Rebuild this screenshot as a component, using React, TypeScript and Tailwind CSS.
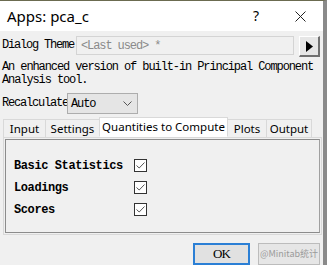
export default function App() {
  const mono = { fontFamily: '"Liberation Mono", "DejaVu Sans Mono", monospace' };
  const ui = { fontFamily: '"Segoe UI", "Noto Sans", "Open Sans", sans-serif' };
  const items = ['Basic Statistics', 'Loadings', 'Scores'];
  const tabs = [
    { label: 'Input', w: 'w-[43px]' },
    { label: 'Settings', w: 'w-[55px]' },
    { label: 'Quantities to Compute', w: 'w-[129px]', active: true },
    { label: 'Plots', w: 'w-[40px]' },
    { label: 'Output', w: 'w-[46px]' },
  ];

  return (
    <div className="w-[327px] h-[265px] bg-[#f0f0f0] overflow-hidden border-t border-t-[#6b6b50] border-r-[4px] border-r-[#8a8a8a] flex flex-col text-black">
      {/* Title bar */}
      <div className="h-[30px] bg-white flex items-center shrink-0">
        <span className="pl-[7px] text-[15px] leading-none" style={ui}>Apps: pca_c</span>
        <span className="ml-auto mr-[36px] text-[14px] leading-none" style={ui}>?</span>
        <svg className="mr-[17px]" width="11" height="11" viewBox="0 0 11 11">
          <path d="M0.5 0.5 L10.5 10.5 M10.5 0.5 L0.5 10.5" stroke="#222" strokeWidth="1" />
        </svg>
      </div>

      {/* Dialog theme */}
      <div className="flex items-start mt-[5px] h-[21px]">
        <span className="pl-[2px] w-[76px] pt-[3px] text-[12px] tracking-[-1.2px] leading-[13px] whitespace-nowrap" style={mono}>Dialog Theme</span>
        <div className="w-[218px] h-[19px] border border-[#d4d4d4] bg-[#f0f0f0] flex items-center pl-[4px]">
          <span className="text-[12px] tracking-[-1.1px] text-[#8a8a8a]" style={mono}>&lt;Last used&gt; *</span>
        </div>
        <div className="ml-[5px] w-[21px] h-[21px] bg-[#e6e6e6] border-t border-l border-t-white border-l-white border-b-2 border-r-2 border-b-[#707070] border-r-[#707070] flex items-center justify-center">
          <svg width="7" height="11" viewBox="0 0 7 11"><path d="M0 0 L7 5.5 L0 11 Z" fill="#000" /></svg>
        </div>
      </div>

      {/* Description */}
      <p className="mt-[4px] pl-[2px] text-[12px] tracking-[-1.1px] leading-[13px]" style={mono}>
        An enhanced version of built-in Principal Component<br />Analysis tool.
      </p>

      {/* Recalculate */}
      <div className="flex items-center mt-[5px] h-[22px]">
        <span className="pl-[2px] w-[67px] overflow-hidden whitespace-nowrap text-[12px] tracking-[-1.2px]" style={mono}>Recalculate</span>
        <div className="w-[71px] h-[21px] border border-[#adadad] bg-[#e5e5e5] flex items-center pl-[3px] pr-[5px]">
          <span className="text-[12px] tracking-[-1.1px] pt-[2px]" style={mono}>Auto</span>
          <svg className="ml-auto" width="9" height="5" viewBox="0 0 9 5"><path d="M0.5 0.5 L4.5 4.5 L8.5 0.5" stroke="#555" fill="none" /></svg>
        </div>
      </div>

      {/* Tabs */}
      <div className="flex items-end mt-[3px] pl-[3px] h-[20px]">
        {tabs.map((t) => (
          <div
            key={t.label}
            className={`${t.w} flex items-center justify-center whitespace-nowrap text-[11.5px] leading-none border border-[#d9d9d9] -ml-px first:ml-0 ${t.active ? 'h-[20px] bg-white border-b-white z-10' : 'h-[18px] bg-[#f0f0f0] border-b-0'}`}
            style={ui}
          >
            {t.label}
          </div>
        ))}
      </div>

      {/* Panel */}
      <div className="ml-[3px] mr-[1px] h-[98px] border border-[#d9d9d9] p-[1px] shrink-0">
        <div className="h-full border border-[#8c8c8c] border-r-[#a0a0a0] flex flex-col pt-[19px] pl-[8px] gap-[9px]">
          {items.map((label) => (
            <div key={label} className="flex items-center h-[13px]">
              <span className="w-[120px] text-[12px] font-bold tracking-[-0.4px]" style={mono}>{label}</span>
              <div className="w-[13px] h-[13px] border border-[#333] bg-white flex items-center justify-center">
                <svg width="9" height="7" viewBox="0 0 9 7"><path d="M0.5 3.5 L3.2 6 L8.5 0.5" stroke="#555" strokeWidth="1" fill="none" /></svg>
              </div>
            </div>
          ))}
        </div>
      </div>

      {/* Buttons */}
      <div className="flex items-start mt-[8px] pl-[193px] gap-[8px]">
        <div className="w-[57px] h-[22px] border-2 border-[#2b7fd5] bg-[#e1e1e1] flex items-center justify-center">
          <span className="text-[13px] tracking-[-1px]" style={{ fontFamily: '"Liberation Serif", serif' }}>OK</span>
        </div>
        <div className="w-[62px] h-[22px] border border-[#bcbcbc] bg-[#e6e6e6] flex items-center justify-center overflow-hidden">
          <span className="text-[9px] whitespace-nowrap text-[#9a9a9a]" style={{ fontFamily: '"Noto Sans CJK SC", sans-serif' }}>@Minitab统计</span>
        </div>
      </div>
    </div>
  );
}
